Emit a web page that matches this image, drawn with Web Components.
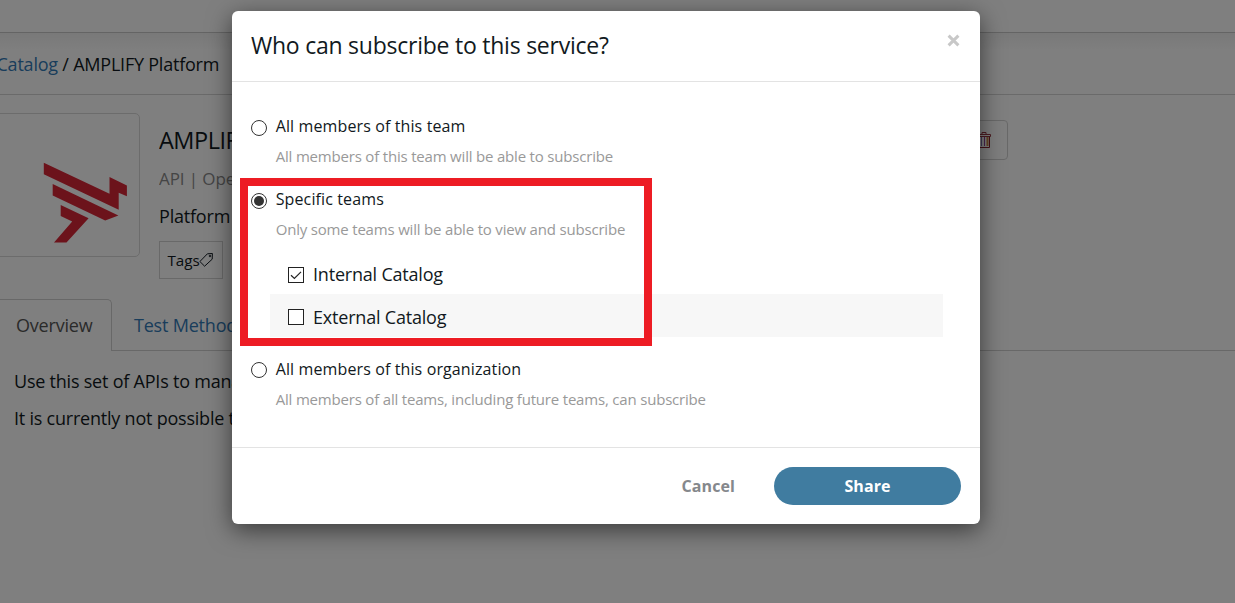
<!DOCTYPE html>
<html lang="en">
<head>
<meta charset="utf-8">
<title>Share service</title>
<style>
html,body{margin:0;height:100%;overflow:hidden;background:#fff}
body{font-family:"Open Sans","Noto Sans",sans-serif;color:#111921}
</style>
</head>
<body>
<share-app></share-app>
<script>
const define=(name,html)=>customElements.define(name,class extends HTMLElement{
  constructor(){super();const t=document.createElement('template');t.innerHTML=html;this.attachShadow({mode:'open'}).append(t.content.cloneNode(true));}
});

define('page-crumbs',`<style>
:host{display:block}
.top{height:32px;border-bottom:1px solid #c8c8c8}
nav{height:61px;border-bottom:1px solid #d4d4d4;display:flex;align-items:center;font-size:18px;line-height:24px;letter-spacing:-.22px;white-space:pre;background:linear-gradient(#f2f2f2,#fff 18px)}
a{color:#337ab7;margin-left:-3.5px}
</style><div class="top"></div><nav><a>Catalog</a><span> / AMPLIFY Platform</span></nav>`);

define('brand-logo',`<style>
:host{display:block;box-sizing:border-box;width:160px;height:144px;margin-left:-20px;border:1px solid #d8d8d8;border-radius:5px}
svg{display:block;margin:49px 0 0 62px;overflow:visible}
</style><svg width="85" height="81" viewBox="0 0 85 81" fill="#d92637"><path d="M.8 -.3V11.2L75.7 46.8V29.8L83.9 33.2V22.4L66.5 14V30.8Z"/><path d="M9.7 21V32.5L62.2 57.4L75.4 52.5Z"/><path d="M17.7 42V53L29.2 58.5L11 79.4H23.5L45.6 55.2Z"/></svg>`);

define('tag-button',`<style>
:host{display:inline-flex;box-sizing:border-box;align-items:center;width:64px;height:38px;border:1px solid #d2d2d2;padding-left:7.5px;font-size:15.2px;line-height:22px}
svg{flex:none;margin:0 0 1px -1px}
</style><slot></slot><svg width="15" height="16" viewBox="0 0 15 16" fill="none" stroke="#111921" stroke-width="1"><path d="M8.4 1.8L13.4 1.5L13.2 7.2L5.6 14.2L.9 9.5Z" stroke-linejoin="round"/><circle cx="11" cy="4" r=".8"/></svg>`);

define('trash-button',`<style>
:host{display:flex;box-sizing:border-box;width:60px;height:40px;border:1px solid #d2d2d2;border-radius:4px;align-items:center;justify-content:flex-end;padding-right:16px}
</style><svg width="14" height="18" viewBox="0 0 14 18" fill="none"><path d="M.5 3.5H13.5V5.5H.5ZM5 3V1.5H9V3" stroke="#9c3b45"/><path d="M1.5 5.5V16.5H12.5V5.5" stroke="#8d2331"/><path d="M4.5 6V15" stroke="#8474b0"/><path d="M7.5 6V15" stroke="#95449a"/><path d="M10.5 6V15" stroke="#d18b48" stroke-width="2"/></svg>`);

define('service-card',`<style>
:host{display:flex;height:204px;box-sizing:border-box;padding-top:18px}
.info{margin-left:19px;width:821px;white-space:nowrap;overflow:hidden}
h1{font-weight:400;font-size:23.5px;letter-spacing:-.5px;line-height:32px;margin:11px 0 0}
.kind{font-size:17px;line-height:24px;margin-top:11px;color:#8a8a8a;letter-spacing:-.1px}
.desc{font-size:18px;line-height:24px;margin:13px 0;letter-spacing:-.2px}
trash-button{margin:7px 0 0 -32px}
</style><brand-logo></brand-logo><div class="info"><h1>AMPLIFY</h1><div class="kind">API | Open</div><div class="desc">Platform</div><tag-button>Tags</tag-button></div><trash-button></trash-button>`);

define('page-tabs',`<style>
:host{display:flex;height:52px;font-size:18px;letter-spacing:-.2px;white-space:nowrap}
.on,.off{box-sizing:border-box;height:52px;line-height:51px}
.on{width:112px;border:1px solid #d0d0d0;border-width:1px 1px 0 0;border-radius:0 5px 0 0;padding-left:16px;color:#555}
.off{flex:1;border-bottom:1px solid #d0d0d0;padding:1px 0 0 22px;color:#337ab7}
</style><div class="on">Overview</div><div class="off">Test Methods</div>`);

define('page-copy',`<style>
:host{display:block;padding:18px 0 0 14px;font-size:18px;letter-spacing:-.22px;line-height:25px;white-space:nowrap}
p{margin:0 0 12px}
</style><p>Use this set of APIs to manage</p><p>It is currently not possible to</p>`);

define('choice-row',`<style>
:host{display:grid;grid-template-columns:17px 1fr;column-gap:7.7px;font-size:16px;letter-spacing:.12px;line-height:24px;align-items:start}
i{box-sizing:border-box;width:16px;height:16px;border:1.3px solid #333;border-radius:50%;margin-top:var(--dot-top,6px);display:grid;place-items:center}
:host([checked]) i::after{content:"";width:10px;height:10px;border-radius:50%;background:#333}
small{display:block;font-size:15px;letter-spacing:-.19px;line-height:22px;margin-top:7px;color:#999}
</style><i></i><div><slot></slot><small><slot name="hint"></slot></small></div>`);

define('team-row',`<style>
:host{display:flex;align-items:center;height:43px;box-sizing:border-box;padding:3px 0 0 18px;font-size:18px;letter-spacing:-.2px;line-height:24px;gap:9px}
:host([shaded]){background:#f7f7f7}
svg{flex:none}path{display:none}:host([checked]) path{display:block}:host([checked]) svg{margin-top:2px}
</style><svg width="16" height="16" fill="none" stroke="#222"><rect x=".5" y=".5" width="15" height="15" fill="#fff"/><path d="M3 8.2L6.4 11.5L13 4.8" stroke-width="1.2"/></svg><span><slot></slot></span>`);

define('share-dialog',`<style>
:host{display:flex;flex-direction:column;box-sizing:border-box;width:748px;height:513px;background:#fff;border-radius:6px;box-shadow:0 6px 25px rgba(0,0,0,.55)}
header{height:70px;box-sizing:content-box;border-bottom:1px solid #e3e3e3;display:flex;justify-content:space-between;padding:0 20px 0 19px}
h2{font-weight:400;font-size:23px;letter-spacing:-.24px;line-height:33px;margin:18px 0 0}
header svg{margin-top:23px}
main{height:365px;box-sizing:border-box;padding:32px 37px 0 19px}
.teams{margin:11px 0 20px 19px}
choice-row+choice-row{margin-top:20px}
.teams+choice-row{--dot-top:5px}
footer{flex:1;border-top:1px solid #e3e3e3;display:flex;padding:19px 19px 0 0;justify-content:flex-end;font-weight:700;font-size:16px;letter-spacing:.1px;line-height:38px}
.cancel{color:#85888c;margin-right:39px}
.share{width:187px;height:38px;border-radius:19px;background:#407ca0;color:#fff;text-align:center}
</style>
<header><h2>Who can subscribe to this service?</h2><svg width="13" height="13" viewBox="0 0 13 13" stroke="#c8c8c8" stroke-width="3"><path d="M1.6 1.6L11.4 11.4M11.4 1.6L1.6 11.4"/></svg></header>
<main><choice-row>All members of this team<span slot="hint">All members of this team will be able to subscribe</span></choice-row>
<choice-row checked>Specific teams<span slot="hint">Only some teams will be able to view and subscribe</span></choice-row>
<div class="teams"><team-row checked>Internal Catalog</team-row><team-row shaded>External Catalog</team-row></div>
<choice-row>All members of this organization<span slot="hint">All members of all teams, including future teams, can subscribe</span></choice-row></main>
<footer><span class="cancel">Cancel</span><span class="share">Share</span></footer>`);

define('share-app',`<style>
:host{display:block;position:relative;width:1235px;height:603px;overflow:hidden}
.veil{position:absolute;inset:0;background:rgba(0,0,0,.5)}
share-dialog{position:absolute;left:232px;top:11px}
.mark{position:absolute;left:240px;top:178px;width:412px;height:168px;box-sizing:border-box;border:8px solid #ed1c24}
</style><page-crumbs></page-crumbs><service-card></service-card><page-tabs></page-tabs><page-copy></page-copy>
<div class="veil"></div><share-dialog></share-dialog><div class="mark"></div>`);
</script>
</body>
</html>
